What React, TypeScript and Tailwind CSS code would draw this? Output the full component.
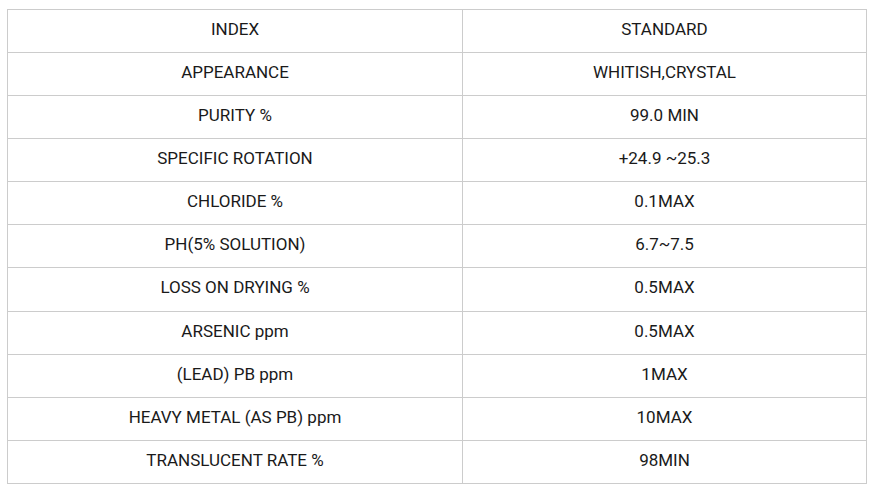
const rows: [string, string][] = [
  ["INDEX", "STANDARD"],
  ["APPEARANCE", "WHITISH,CRYSTAL"],
  ["PURITY %", "99.0 MIN"],
  ["SPECIFIC ROTATION", "+24.9 ~25.3"],
  ["CHLORIDE %", "0.1MAX"],
  ["PH(5% SOLUTION)", "6.7~7.5"],
  ["LOSS ON DRYING %", "0.5MAX"],
  ["ARSENIC ppm", "0.5MAX"],
  ["(LEAD) PB ppm", "1MAX"],
  ["HEAVY METAL (AS PB) ppm", "10MAX"],
  ["TRANSLUCENT RATE %", "98MIN"],
];

export default function App() {
  return (
    <main className="min-h-[495px] w-[882px] bg-white pl-[7px] pt-[9px] font-['Roboto',sans-serif] text-[17px] leading-[20px] text-[#1a1a1a]">
      <table className="w-[860px] table-fixed border-collapse">
        <colgroup>
          <col className="w-[455px]" />
          <col />
        </colgroup>
        <tbody>
          {rows.map(([index, standard], i) => (
            <tr key={index} className={i === 6 ? "h-[44px]" : "h-[43px]"}>
              <td className={`border border-[#cccccc] p-0 text-center align-middle ${i === 6 ? "pb-[5px]" : "pb-[4px]"}`}>{index}</td>
              <td className={`border border-[#cccccc] p-0 text-center align-middle ${i === 6 ? "pb-[5px]" : "pb-[4px]"}`}>{standard}</td>
            </tr>
          ))}
        </tbody>
      </table>
    </main>
  );
}
